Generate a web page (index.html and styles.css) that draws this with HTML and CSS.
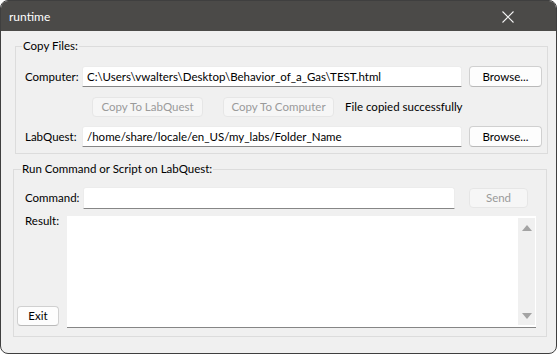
FILE: index.html
```html
<!DOCTYPE html>
<html lang="en">
<head>
  <meta charset="UTF-8">
  <meta name="viewport" content="width=device-width, initial-scale=1.0">
  <title>runtime</title>
  <link rel="stylesheet" href="styles.css">
</head>
<body>
  <div class="window">
    <!-- title bar -->
    <div class="titlebar">
      <span class="title">runtime</span>
      <svg class="close" width="12" height="12" viewBox="0 0 12 12">
        <path d="M0.5 0.5 L11.5 11.5 M11.5 0.5 L0.5 11.5" stroke="#f2f2f2" stroke-width="1.1" fill="none"/>
      </svg>
    </div>

    <div class="content">
      <!-- copy files group -->
      <fieldset class="group group-copy">
        <legend>Copy Files:</legend>
        <div class="copy-grid">
          <span class="label">Computer:</span>
          <div class="field">C:\Users\vwalters\Desktop\Behavior_of_a_Gas\TEST.html</div>
          <button class="btn btn-browse">Browse...</button>

          <span></span>
          <div class="copy-actions">
            <button class="btn btn-copy" disabled>Copy To LabQuest</button>
            <button class="btn btn-copy" disabled>Copy To Computer</button>
            <span class="status">File copied successfully</span>
          </div>
          <span></span>

          <span class="label">LabQuest:</span>
          <div class="field">/home/share/locale/en_US/my_labs/Folder_Name</div>
          <button class="btn btn-browse">Browse...</button>
        </div>
      </fieldset>

      <!-- run command group -->
      <fieldset class="group group-run">
        <legend>Run Command or Script on LabQuest:</legend>
        <div class="command-row">
          <span class="label">Command:</span>
          <div class="field field-command"></div>
          <button class="btn btn-send" disabled>Send</button>
        </div>
        <div class="result-row">
          <div class="result-side">
            <span class="label label-result">Result:</span>
            <button class="btn btn-exit">Exit</button>
          </div>
          <div class="result-box">
            <div class="result-text"></div>
            <div class="scrollbar">
              <span class="arrow arrow-up"></span>
              <span class="arrow arrow-down"></span>
            </div>
          </div>
        </div>
      </fieldset>
    </div>
  </div>
</body>
</html>
```

FILE: styles.css
```css
/* page + window frame */
html {
  background: #ffffff;
}

body {
  margin: 0;
  font-family: Lato, "Noto Sans", sans-serif;
  font-size: 11.5px;
  line-height: 16px;
  color: #000;
}

.window {
  width: 557px;
  height: 354px;
  box-sizing: border-box;
  border: 1px solid #3f3f3f;
  border-radius: 8px;
  background: #f0f0f0;
  overflow: hidden;
  display: flex;
  flex-direction: column;
}

/* title bar */
.titlebar {
  height: 30px;
  flex-shrink: 0;
  background: #4b4a48;
  display: flex;
  align-items: center;
  justify-content: space-between;
  padding: 0 42px 0 8px;
}

.title {
  color: #ffffff;
  font-size: 12px;
  margin-top: 1px;
}

.close {
  display: block;
  margin-top: 1px;
}

.content {
  flex: 1;
  display: flex;
  flex-direction: column;
}

/* group boxes */
.group {
  border: 1px solid #dcdcdc;
  margin: 0;
  min-inline-size: 0;
}

.group legend {
  padding: 0 1px;
  line-height: 16px;
}

.group-copy {
  margin: 7px 8px 0 14px;
  padding: 12px 5px 6px 9px;
}

.group-copy legend {
  margin-left: -3px;
}

.group-run {
  margin: 7px 9px 0 12px;
  padding: 10px 4px 8px 3px;
}

.group-run legend {
  margin-left: 4px;
}

.label {
  white-space: nowrap;
}

/* copy files grid */
.copy-grid {
  display: grid;
  grid-template-columns: 50px 380px 73px;
  column-gap: 7px;
  row-gap: 9px;
  align-items: center;
}

.copy-actions {
  display: flex;
  align-items: center;
  margin: 1px 0 0 10px;
}

.copy-actions .btn-copy + .btn-copy {
  margin-left: 20px;
}

.status {
  margin-left: 11px;
  white-space: nowrap;
}

/* edit fields */
.field {
  height: 21px;
  box-sizing: border-box;
  background: #ffffff;
  border: 1px solid #ececec;
  border-bottom-color: #868686;
  border-radius: 3px 3px 0 0;
  padding: 1px 4px 0;
  line-height: 18px;
  white-space: nowrap;
  overflow: hidden;
}

/* buttons */
.btn {
  font-family: inherit;
  font-size: 11.5px;
  line-height: 16px;
  color: #000;
  background: #fdfdfd;
  border: 1px solid #d0d0d0;
  border-bottom-color: #b9b9b9;
  border-radius: 4px;
  padding: 0;
  height: 20px;
  box-sizing: border-box;
  white-space: nowrap;
  flex-shrink: 0;
}

.btn:disabled {
  color: #9a9a9a;
  background: #f6f6f6;
  border-color: #e6e6e6;
}

.btn-browse {
  height: 21px;
}

.btn-copy {
  width: 111px;
}

/* run command */
.command-row {
  display: grid;
  grid-template-columns: 58px 372px 73px;
  align-items: center;
  margin-left: 8px;
}

.btn-send {
  margin-left: 14px;
}

.field-command {
  height: 22px;
}

.result-row {
  display: flex;
  margin-top: 7px;
}

.result-side {
  width: 50px;
  display: flex;
  flex-direction: column;
  justify-content: space-between;
  align-items: flex-start;
}

.label-result {
  margin: -3px 0 0 8px;
}

.btn-exit {
  width: 42px;
  margin-bottom: 2px;
}

.result-box {
  width: 469px;
  height: 112px;
  box-sizing: border-box;
  background: #ffffff;
  border-bottom: 1px solid #868686;
  display: flex;
  padding: 2px 1px 2px 0;
}

.result-text {
  flex: 1;
}

.scrollbar {
  width: 17px;
  background: #f0f0f0;
  display: flex;
  flex-direction: column;
  justify-content: space-between;
  align-items: center;
  padding: 7px 0 6px;
}

.arrow {
  width: 0;
  height: 0;
  border-left: 5px solid transparent;
  border-right: 5px solid transparent;
}

.arrow-up {
  border-bottom: 6px solid #a3a3a3;
}

.arrow-down {
  border-top: 6px solid #a3a3a3;
}
```
